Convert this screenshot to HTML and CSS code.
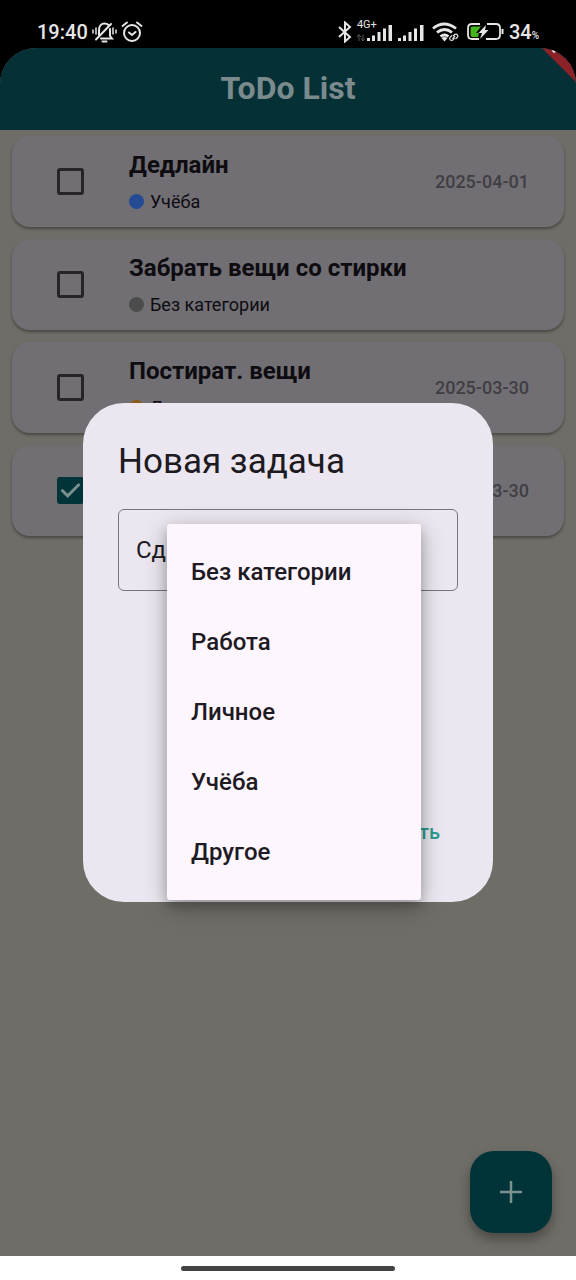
FILE: index.html
```
<!DOCTYPE html>
<html lang="ru">
<head>
<meta charset="utf-8">
<meta name="viewport" content="width=device-width, initial-scale=1">
<title>ToDo List</title>
<link rel="stylesheet" href="styles.css">
</head>
<body>
<div class="status">
  <div class="status-group status-left">
    <span class="clock">19:40</span>
    <svg width="25" height="22" viewBox="0 0 25 22" fill="none" stroke="#e6e6e6" stroke-width="2" stroke-linecap="round">
      <path d="M7 14V9c0-4 2.500-6.500 5.500-6.500 1.800 0 3 .5 4 1.500M18 8v7l2 2.500H9"/>
      <path d="M4 18.500 19 3"/>
      <path d="M10.500 20.500h4" stroke-width="2"/>
      <path d="M1 9v3M4 7v6M21 7v6M24 9v3" stroke-width="1.500"/>
    </svg>
    <svg width="22" height="22" viewBox="0 0 22 22" fill="none" stroke="#e6e6e6" stroke-width="2" stroke-linecap="round">
      <circle cx="11" cy="12" r="8"/>
      <path d="m8 11.500 3 2.500 3.500-3M1.500 5 6 1.500M16 1.500 20.500 5"/>
    </svg>
  </div>
  <div class="status-group status-right">
    <svg width="14" height="22" viewBox="0 0 14 22" fill="none" stroke="#e6e6e6" stroke-width="2"><path d="m1 6 11 10-5 4.500v-19L12 6 1 16"/></svg>
    <div class="network">
      <span class="network-type">4G+</span>
      <svg width="36" height="20" viewBox="0 0 36 20" fill="#e6e6e6">
        <path d="M10 16h3v3h-3zM15 13.500h3V19h-3zM20.500 10h3v9h-3zM26 6.500h3V19h-3zM31.500 3H35v16h-3.500z"/>
        <path d="M2 19v-6M0 15l2-2.500L4 15M6 12.500v6M4.500 16.500 6 19l2-2.500" fill="none" stroke="#555"/>
      </svg>
    </div>
    <svg width="26" height="20" viewBox="0 0 26 20" fill="#e6e6e6"><path d="M0 16h3v3H0zM5 13.500h3V19H5zM10.500 10h3v9h-3zM16 6.500h3V19h-3zM22 3h3.500v16H22z"/></svg>
    <svg class="icon-wifi" width="27" height="20" viewBox="0 0 27 20" fill="none" stroke="#e6e6e6">
      <path d="M1 6.500q11-9 23 0M5 10.500q7.500-6 15 0M8.500 14.500q4-3 8 0" stroke-width="2.800"/>
      <path d="m9.500 16 3 3.500 3-3.500q-3-2-6 0z" fill="#e6e6e6" stroke="none"/>
      <path d="m21 14 1.500-1.500q2-1 3 .5t-.5 2.500l-1.500 1.500M22.500 16l-1.500 2q-2 1-3-.5t.5-2.500l1.500-1.500M20.500 17l2.500-3" stroke-width="1.200"/>
    </svg>
    <svg class="icon-battery" width="37" height="20" viewBox="0 0 37 20" fill="none" stroke="#e6e6e6" stroke-width="1.800">
      <path d="M13 2H5q-4 0-4 4v7q0 4 4 4h7M20 2h9q4 0 4 4v7q0 4-4 4H19"/>
      <path d="M35.500 7v5" stroke-width="2"/>
      <path d="M5.500 4.500H14l-5 6.500h3l-1 4H5.500q-2 0-2-2V6.500q0-2 2-2z" fill="#45b51f" stroke="none"/>
      <path d="M19 3 11.500 11H15l-2 6 8.500-9H18z" fill="#e6e6e6" stroke="none"/>
    </svg>
    <span class="charge">34<small>%</small></span>
  </div>
</div>

<div class="app">
  <header class="appbar">
    <h1>ToDo List</h1>
    <svg class="ribbon" width="34" height="34" viewBox="0 0 34 34"><path d="M0 0h34v34z" fill="#8b2227"/><path d="m10 0 2 3 3.500-1" fill="none" stroke="#fff" stroke-width="3"/></svg>
  </header>

  <main class="tasks">
    <article class="task">
      <input class="check" type="checkbox" aria-label="Дедлайн">
      <div class="task-text">
        <h2>Дедлайн</h2>
        <p class="category"><span class="dot dot-study"></span>Учёба</p>
      </div>
      <time>2025-04-01</time>
    </article>
    <article class="task">
      <input class="check" type="checkbox" aria-label="Забрать вещи со стирки">
      <div class="task-text">
        <h2>Забрать вещи со стирки</h2>
        <p class="category"><span class="dot dot-none"></span>Без категории</p>
      </div>
    </article>
    <article class="task">
      <input class="check" type="checkbox" aria-label="Постират. вещи">
      <div class="task-text">
        <h2>Постират. вещи</h2>
        <p class="category"><span class="dot dot-personal"></span>Личное</p>
      </div>
      <time>2025-03-30</time>
    </article>
    <article class="task">
      <input class="check" type="checkbox" aria-label="Задача" checked>
      <div class="task-text"></div>
      <time>2025-03-30</time>
    </article>
  </main>

  <button class="fab" type="button" aria-label="Добавить задачу">
    <svg width="22" height="22" viewBox="0 0 22 22" stroke="#7b8f8f" stroke-width="2.500"><path d="M11 0v22M0 11h22"/></svg>
  </button>

  <div class="overlay">
    <section class="dialog" role="dialog" aria-labelledby="dialog-title">
      <h2 id="dialog-title">Новая задача</h2>
      <input class="field" type="text" value="Сд" aria-label="Название задачи">
      <div class="actions">
        <button type="button">Добавить</button>
      </div>
      <div class="menu" role="listbox" aria-label="Категория">
        <button type="button" role="option">Без категории</button>
        <button type="button" role="option">Работа</button>
        <button type="button" role="option">Личное</button>
        <button type="button" role="option">Учёба</button>
        <button type="button" role="option">Другое</button>
      </div>
    </section>
  </div>
</div>

<div class="navbar"><div class="handle"></div></div>
</body>
</html>
```
FILE: styles.css
```
* { box-sizing: border-box; }

body {
  margin: 0;
  min-height: 100vh;
  display: flex;
  flex-direction: column;
  background: #000;
  color: #0e0c11;
  font-family: Roboto, "Noto Sans", sans-serif;
}

h1, h2, p { margin: 0; }
button, input { font-family: inherit; }
svg { display: block; flex: none; }

/* System status bar */
.status {
  height: 48px;
  padding: 16px 37px 0;
  display: flex;
  justify-content: space-between;
  color: #e6e6e6;
}
.status-group { display: flex; align-items: center; }
.status-left { gap: 4px; }
.status-right { gap: 5px; }
.clock, .charge { font-size: 20px; font-weight: 500; }
.charge small { font-size: 10px; }
.network { position: relative; }
.network-type { position: absolute; top: -3px; left: 0; font-size: 11px; line-height: 12px; }
.icon-wifi, .icon-battery { margin-left: 3px; }

/* App */
.app {
  position: relative;
  flex: 1;
  display: flex;
  flex-direction: column;
  overflow: hidden;
  border-radius: 36px 36px 0 0;
  background: #6f6d67;
}
.appbar {
  position: relative;
  height: 82px;
  padding-bottom: 2px;
  display: flex;
  align-items: center;
  justify-content: center;
  background: #053036;
}
.appbar h1 { font-size: 32px; font-weight: 700; color: #7b8a8d; }
.ribbon { position: absolute; top: 0; right: 0; }

.tasks { display: flex; flex-direction: column; gap: 12px; padding: 6px 12px; }
.task {
  height: 91px;
  padding: 0 35px 0 45px;
  display: flex;
  align-items: center;
  border-radius: 18px;
  background: #716f74;
  box-shadow: 0 2px 3px rgba(0, 0, 0, .35);
}
.check {
  appearance: none;
  flex: none;
  width: 27px;
  height: 27px;
  margin: 0 45px 0 0;
  border: 3px solid #262429;
  border-radius: 3px;
}
.check:checked {
  border-color: #003438;
  background: #003438;
  display: grid;
  place-items: center;
}
.check:checked::before {
  content: "";
  width: 20px;
  height: 15px;
  background: #7b8f8f;
  clip-path: polygon(0 52%, 10% 38%, 36% 72%, 90% 0, 100% 14%, 36% 100%);
}
.task-text { flex: 1; display: flex; flex-direction: column; gap: 12px; }
.task-text h2 { font-size: 24px; line-height: 28px; font-weight: 700; }
.category { display: flex; align-items: center; gap: 6px; font-size: 18px; line-height: 22px; }
.dot { width: 15px; height: 15px; border-radius: 50%; }
.dot-study { background: #244b94; }
.dot-none { background: #4d4c4c; }
.dot-personal { background: #8b5a12; }
.task time { font-size: 18px; font-weight: 500; color: #403e43; }

.fab {
  position: absolute;
  right: 24px;
  bottom: 23px;
  width: 82px;
  height: 82px;
  padding: 0;
  display: grid;
  place-items: center;
  border: 0;
  border-radius: 24px;
  background: #003438;
  box-shadow: 0 6px 12px rgba(0, 0, 0, .35);
}

/* Dialog */
.overlay {
  position: absolute;
  inset: 0;
  padding: 0 83px;
  display: flex;
  align-items: center;
}
.dialog {
  position: relative;
  flex: 1;
  min-width: 0;
  padding: 35px;
  display: flex;
  flex-direction: column;
  border-radius: 41px;
  background: #ebe6ef;
}
.dialog h2 { font-size: 35px; line-height: 47px; font-weight: 400; color: #1d1a22; }
.field {
  width: 100%;
  height: 82px;
  margin-top: 24px;
  padding: 0 17px;
  border: 1px solid #79747e;
  border-radius: 6px;
  background: transparent;
  font-size: 24px;
  color: #1d1a22;
}
.actions { margin-top: 206px; display: flex; justify-content: flex-end; }
.actions button {
  height: 70px;
  padding: 0 18px;
  border: 0;
  background: none;
  font-size: 20px;
  font-weight: 500;
  color: #2b9c8c;
}
.menu {
  position: absolute;
  top: 121px;
  left: 84px;
  right: 72px;
  padding: 13px 0;
  display: flex;
  flex-direction: column;
  border-radius: 3px;
  background: #fdf6ff;
  box-shadow: 0 6px 24px rgba(0, 0, 0, .25), 0 6px 12px rgba(0, 0, 0, .2);
}
.menu button {
  height: 70px;
  padding: 0 24px;
  border: 0;
  background: none;
  text-align: left;
  font-size: 24px;
  font-weight: 500;
  color: #1d1a22;
}

/* System navigation */
.navbar {
  height: 24px;
  padding-top: 10px;
  display: flex;
  justify-content: center;
  background: #fff;
}
.handle { width: 37%; height: 5px; border-radius: 3px; background: #434343; }
```
